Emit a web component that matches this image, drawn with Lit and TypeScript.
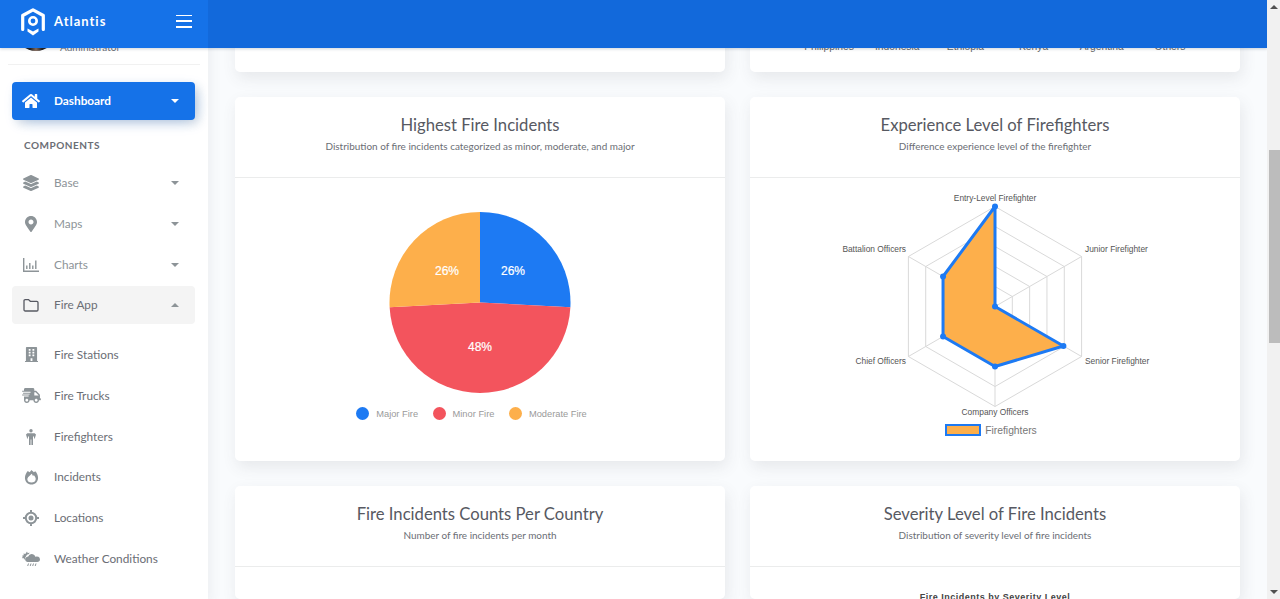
import { LitElement, css, html, svg } from "lit";
import { customElement } from "lit/decorators.js";

const ICONS: Record<string, unknown> = {
	home: svg`<svg viewBox="0 0 576 512" width="18" height="16"><path fill="currentColor" d="M280.4 148.3 96 300.1V464a16 16 0 0 0 16 16l112-.3a16 16 0 0 0 15.9-16V368a16 16 0 0 1 16-16h64a16 16 0 0 1 16 16v95.6a16 16 0 0 0 16 16.1l112 .3a16 16 0 0 0 16-16V300L295.700 148.300a12.200 12.200 0 0 0-15.300 0zM571.600 251.500 488 182.600V44a12 12 0 0 0-12-12h-56a12 12 0 0 0-12 12v72.600L318.500 43a48 48 0 0 0-61 0L4.300 251.500a12 12 0 0 0-1.600 16.900l25.500 31A12 12 0 0 0 45.200 301l235.200-193.700a12.200 12.200 0 0 1 15.300 0L530.900 301a12 12 0 0 0 16.900-1.600l25.500-31a12 12 0 0 0-1.700-16.900z"/></svg>`,
	layers: svg`<svg viewBox="0 0 512 512" width="16" height="16"><path fill="currentColor" d="M12.410 148l232.940 105.700a26.500 26.500 0 0 0 21.300 0L499.590 148c16.550-7.510 16.550-32.520 0-40L266.650 2.300a26.500 26.500 0 0 0-21.300 0L12.410 108c-16.550 7.510-16.550 32.520 0 40zm487.180 88.280-58.090-26.330-161.640 73.270a58.500 58.500 0 0 1-47.720 0L70.500 209.950l-58.090 26.330c-16.550 7.500-16.550 32.500 0 40l232.940 105.590a26.500 26.500 0 0 0 21.300 0L499.590 276.280c16.550-7.500 16.550-32.500 0-40zm0 127.800-57.870-26.230-161.860 73.370a58.500 58.500 0 0 1-47.720 0L70.280 337.850l-57.870 26.230c-16.550 7.500-16.550 32.500 0 40l232.940 105.590a26.500 26.500 0 0 0 21.300 0l232.940-105.590c16.550-7.500 16.550-32.500 0-40z"/></svg>`,
	marker: svg`<svg viewBox="0 0 384 512" width="12" height="16"><path fill="currentColor" d="M172.268 501.670C26.970 291.031 0 268.413 0 192 0 85.961 85.961 0 192 0s192 85.961 192 192c0 76.413-26.970 99.031-172.268 309.670-9.535 13.774-29.930 13.773-39.464 0zM192 272c44.183 0 80-35.817 80-80s-35.817-80-80-80-80 35.817-80 80 35.817 80 80 80z"/></svg>`,
	chart: svg`<svg viewBox="0 0 16 14" width="16" height="14"><path fill="none" stroke="currentColor" stroke-width="1.400" d="M.7 0v13.300H16M3.800 11V7.500M6.800 11V5M9.800 11V7.500M12.800 11V2.500"/></svg>`,
	folder: svg`<svg viewBox="0 0 16 14" width="16" height="14"><path fill="none" stroke="currentColor" stroke-width="1.300" d="M1 2.800c0-.7.500-1.200 1.200-1.200h3.300l1.800 1.700h6.500c.7 0 1.200.5 1.200 1.200v7.300c0 .7-.5 1.200-1.200 1.200H2.200c-.7 0-1.200-.5-1.200-1.200z"/></svg>`,
	building: svg`<svg viewBox="0 0 448 512" width="13" height="15"><path fill="currentColor" d="M436 480h-20V24c0-13.255-10.745-24-24-24H56C42.745 0 32 10.745 32 24v456H12c-6.627 0-12 5.373-12 12v20h448v-20c0-6.627-5.373-12-12-12zM128 76c0-6.627 5.373-12 12-12h40c6.627 0 12 5.373 12 12v40c0 6.627-5.373 12-12 12h-40c-6.627 0-12-5.373-12-12V76zm0 96c0-6.627 5.373-12 12-12h40c6.627 0 12 5.373 12 12v40c0 6.627-5.373 12-12 12h-40c-6.627 0-12-5.373-12-12v-40zm52 148h-40c-6.627 0-12-5.373-12-12v-40c0-6.627 5.373-12 12-12h40c6.627 0 12 5.373 12 12v40c0 6.627-5.373 12-12 12zm76 160h-64v-84c0-6.627 5.373-12 12-12h40c6.627 0 12 5.373 12 12v84zm64-172c0 6.627-5.373 12-12 12h-40c-6.627 0-12-5.373-12-12v-40c0-6.627 5.373-12 12-12h40c6.627 0 12 5.373 12 12v40zm0-96c0 6.627-5.373 12-12 12h-40c-6.627 0-12-5.373-12-12v-40c0-6.627 5.373-12 12-12h40c6.627 0 12 5.373 12 12v40zm0-96c0 6.627-5.373 12-12 12h-40c-6.627 0-12-5.373-12-12V76c0-6.627 5.373-12 12-12h40c6.627 0 12 5.373 12 12v40z"/></svg>`,
	truck: svg`<svg viewBox="0 0 640 512" width="19" height="15"><path fill="currentColor" d="M624 352h-16V243.900c0-12.700-5.100-24.900-14.100-33.900L494 110.100c-9-9-21.200-14.100-33.900-14.100H416V48c0-26.500-21.500-48-48-48H112C85.500 0 64 21.500 64 48v48H8c-4.400 0-8 3.600-8 8v16c0 4.400 3.600 8 8 8h272c4.400 0 8 3.600 8 8v16c0 4.400-3.600 8-8 8H40c-4.400 0-8 3.600-8 8v16c0 4.400 3.600 8 8 8h208c4.400 0 8 3.600 8 8v16c0 4.400-3.600 8-8 8H8c-4.400 0-8 3.600-8 8v16c0 4.400 3.600 8 8 8h208c4.400 0 8 3.600 8 8v16c0 4.400-3.600 8-8 8H64v128c0 53 43 96 96 96s96-43 96-96h128c0 53 43 96 96 96s96-43 96-96h48c8.800 0 16-7.200 16-16v-32c0-8.800-7.200-16-16-16zM160 464c-26.500 0-48-21.500-48-48s21.500-48 48-48 48 21.500 48 48-21.500 48-48 48zm320 0c-26.500 0-48-21.500-48-48s21.500-48 48-48 48 21.500 48 48-21.500 48-48 48zm80-208H416V144h44.100l99.900 99.900V256z"/></svg>`,
	person: svg`<svg viewBox="0 0 10 16" width="10" height="16"><circle cx="5" cy="1.800" r="1.700" fill="currentColor"/><path fill="currentColor" d="M1.400 4.300h7.200L10 5.500 8.600 10.200 7.700 7.300 7 7.500V16H5.400v-5.500h-.8V16H3V7.500l-.7-.2-.9 2.900L0 5.500z"/></svg>`,
	fire: svg`<svg viewBox="0 0 16 16" width="15" height="16"><path fill="currentColor" fill-rule="evenodd" d="M4 1.500 6 3 8 .5c1 1 2 1.500 2.500 2.300L12 1.800C13.800 3.500 15 6 15 9c0 4-3.100 7-7 7s-7-3-7-7c0-3 1.300-5.500 3-7.500zM8 4.500C7.500 6 4 7.500 3.500 10c0 2.400 2 3.800 4.500 3.800s4.500-1.400 4.500-3.800c0-1.500-1-3-2-4l-1 1C9.300 6 8.700 5 8 4.500z"/></svg>`,
	target: svg`<svg viewBox="0 0 16 16" width="16" height="16"><path fill="none" stroke="currentColor" stroke-width="2" d="M8 2.800a5.200 5.200 0 1 0 0 10.400 5.200 5.200 0 0 0 0-10.400zM8 0v3M8 13v3M0 8h3M13 8h3"/><circle cx="8" cy="8" r="2.500" fill="currentColor"/></svg>`,
	weather: svg`<svg viewBox="0 0 18 16" width="18" height="16"><path fill="currentColor" d="M5 .5l.8 1.700 1.700-.6-.5 1.500a4 4 0 0 0-3.200 2.700 3 3 0 0 0-1 2.200l-.7.700-.5-1.700-1.600.3.700-1.700L0 4.700l1.800-.5-.3-1.800 1.800.7zM9.500 3a4 4 0 0 1 3.800 2.800A3.200 3.200 0 0 1 18 8.500c0 1.500-1.200 2.500-2.700 2.500H5.500a2.600 2.600 0 0 1-.8-5 2.900 2.900 0 0 1 1.500-.6A4 4 0 0 1 9.500 3z"/><path fill="none" stroke="currentColor" stroke-width="1" d="M6.500 12.500l-.8 2.500M9 12.500l-.8 2.500M11.500 12.500l-.8 2.500M14 12.500l-.8 2.500"/></svg>`,
};

type NavItem = { label: string; icon: string; caret?: "down" | "up"; open?: boolean };

const MAIN_NAV: NavItem[] = [
	{ label: "Base", icon: "layers", caret: "down" },
	{ label: "Maps", icon: "marker", caret: "down" },
	{ label: "Charts", icon: "chart", caret: "down" },
	{ label: "Fire App", icon: "folder", caret: "up", open: true },
];

const SUB_NAV: NavItem[] = [
	{ label: "Fire Stations", icon: "building" },
	{ label: "Fire Trucks", icon: "truck" },
	{ label: "Firefighters", icon: "person" },
	{ label: "Incidents", icon: "fire" },
	{ label: "Locations", icon: "target" },
	{ label: "Weather Conditions", icon: "weather" },
];

const TOP_LEGEND = ["Philippines", "Indonesia", "Ethiopia", "Kenya", "Argentina", "Others"];

// center of the pie and its radius, same numbers as the svg viewBox below
const PIE = { cx: 91, cy: 90.500, r: 90.500 };
const PIE_SLICES = [
	{ pct: 26, name: "Major Fire", start: 0, end: 93, color: "#1d7af3", lx: 124, ly: 63 },
	{ pct: 48, name: "Minor Fire", start: 93, end: 267, color: "#f3545d", lx: 91, ly: 139 },
	{ pct: 26, name: "Moderate Fire", start: 267, end: 360, color: "#fdaf4b", lx: 58, ly: 63 },
];

function slicePath(start: number, end: number) {
	const pt = (a: number) => {
		const rad = ((a - 90) * Math.PI) / 180;
		return `${PIE.cx + PIE.r * Math.cos(rad)} ${PIE.cy + PIE.r * Math.sin(rad)}`;
	};
	const large = end - start > 180 ? 1 : 0;
	return `M${PIE.cx} ${PIE.cy}L${pt(start)}A${PIE.r} ${PIE.r} 0 ${large} 1 ${pt(end)}Z`;
}

// radar: center and outer radius in svg coords, spokes start at 12 o'clock
const RADAR = { cx: 165, cy: 118.500, r: 100 };
const RADAR_DATA = [1, 0, 0.79, 0.6, 0.6, 0.6];

function radarPoint(i: number, f: number) {
	const a = ((i * 60 - 90) * Math.PI) / 180;
	return [RADAR.cx + RADAR.r * f * Math.cos(a), RADAR.cy + RADAR.r * f * Math.sin(a)];
}

@customElement("app-root")
export class AppRoot extends LitElement {
	static styles = css`
		:host {
			display: block;
			height: 599px;
			overflow: hidden;
			position: relative;
			font-family: Lato, "Liberation Sans", sans-serif;
			color: #575962;
			background: #f9fbfd;
		}
		.layout {
			display: flex;
			height: 599px;
		}
		.topbar {
			position: absolute;
			top: 0;
			left: 0;
			right: 13px;
			height: 48px;
			display: flex;
			z-index: 3;
			background: #1269db;
			box-shadow: 0 1px 3px rgba(18, 38, 63, 0.2);
		}
		.brand {
			width: 208px;
			background: #1572e8;
			display: flex;
			align-items: center;
			padding: 0 0 6px 20px;
			box-sizing: border-box;
			color: #fff;
		}
		.logo {
			margin-top: 2px;
			flex: none;
		}
		.brand-name {
			font-size: 13px;
			font-weight: 700;
			letter-spacing: 1px;
			margin-left: 8px;
		}
		.burger {
			margin-left: auto;
			margin-right: 16px;
			width: 16px;
			height: 13px;
			display: flex;
			flex-direction: column;
			justify-content: space-between;
		}
		.burger span {
			height: 1.500px;
			background: #fff;
		}
		.sidebar {
			width: 208px;
			flex: none;
			background: #fff;
			box-shadow: 4px 4px 10px rgba(69, 65, 78, 0.06);
			padding: 0 12px;
			box-sizing: border-box;
			z-index: 1;
			overflow: hidden;
		}
		.user {
			height: 65px;
			margin: 0 -4px;
			padding-left: 52px;
			box-sizing: border-box;
			border-bottom: 1px solid #f1f1f1;
			font-size: 10px;
			color: #6b6e75;
			display: flex;
			align-items: flex-end;
			padding-bottom: 11px;
			position: relative;
		}
		.avatar {
			width: 40px;
			height: 40px;
			border-radius: 50%;
			background: linear-gradient(90deg, #1f1c1c 35%, #8a6f60 50%, #1f1c1c 65%);
			position: absolute;
			left: 8px;
			top: 11px;
		}
		.nav-item {
			display: flex;
			align-items: center;
			height: 38px;
			border-radius: 4px;
			font-size: 11.800px;
			color: #8d9498;
		}
		.nav-item .label {
			padding-bottom: 1px;
		}
		.nav-item .ico {
			width: 20px;
			margin-left: 9px;
			margin-right: 13px;
			display: flex;
			justify-content: center;
			color: #8d9498;
		}
		.nav-item .caret {
			margin-left: auto;
			margin-right: 16px;
			width: 0;
			height: 0;
			border-left: 4px solid transparent;
			border-right: 4px solid transparent;
			border-top: 4px solid #8d9498;
		}
		.nav-item .caret.up {
			border-top: 0;
			border-bottom: 4px solid #8d9498;
		}
		.dashboard {
			margin-top: 17px;
			background: #1572e8;
			color: #fff;
			font-weight: 700;
			box-shadow: 4px 4px 10px 0 rgba(0, 0, 0, 0.1), 4px 4px 15px -5px rgba(21, 114, 232, 0.4);
			width: 183px;
		}
		.dashboard .ico {
			color: #fff;
		}
		.dashboard .caret {
			border-top-color: #fff;
		}
		.section {
			font-size: 10px;
			font-weight: 700;
			letter-spacing: 0.500px;
			color: #6b6e75;
			margin: 18px 0 12px 12px;
			line-height: 14px;
		}
		.nav-list {
			display: flex;
			flex-direction: column;
			gap: 2.800px;
			width: 183px;
		}
		.nav-item.open {
			background: #f4f4f4;
			color: #6b6e75;
		}
		.nav-item.open .ico {
			color: #575962;
		}
		.sub-list {
			display: flex;
			flex-direction: column;
			gap: 2.800px;
			margin-top: 11.600px;
			width: 183px;
		}
		.sub-list .nav-item {
			color: #6b6e75;
		}
		.main {
			flex: 1;
			display: grid;
			grid-template-columns: 490px 490px;
			grid-template-rows: 72px 363.500px 1fr;
			column-gap: 25px;
			row-gap: 25px;
			padding-left: 27px;
			align-content: start;
			overflow: hidden;
			min-width: 0;
		}
		.card {
			background: #fff;
			border-radius: 5px;
			box-shadow: 2px 6px 15px 0 rgba(69, 65, 78, 0.1);
			min-height: 0;
			overflow: hidden;
		}
		.card.clipped {
			border-radius: 0 0 5px 5px;
			display: flex;
			justify-content: center;
			padding: 39.500px 0 0 9px;
			box-sizing: border-box;
		}
		.top-legend {
			display: grid;
			grid-template-columns: repeat(6, 68.200px);
			justify-items: center;
			font: 10.300px "Liberation Sans", sans-serif;
			color: #666;
			line-height: 13px;
		}
		.card-head {
			height: 81px;
			box-sizing: border-box;
			padding-top: 16px;
			text-align: center;
			border-bottom: 1px solid #ebecec;
		}
		.card-title {
			font-size: 16.650px;
			line-height: 24px;
			color: #575962;
		}
		.card-sub {
			font-size: 9.950px;
			line-height: 18px;
			color: #6b6e75;
		}
		.card-body {
			display: flex;
			flex-direction: column;
			align-items: center;
		}
		.pie-body {
			padding-top: 34px;
		}
		.pie-svg {
			display: block;
		}
		.pie-pct {
			font: 12px "Liberation Sans", sans-serif;
			fill: #fff;
			stroke: #fff;
			stroke-width: 0.200px;
			text-anchor: middle;
		}
		.legend {
			display: flex;
			gap: 14.500px;
			margin-top: 13px;
			padding-right: 17px;
			font: 9.300px "Liberation Sans", sans-serif;
			color: #9a9a9a;
			align-items: center;
		}
		.legend-item {
			display: flex;
			align-items: center;
			gap: 7px;
		}
		.dot {
			width: 13px;
			height: 13px;
			border-radius: 50%;
		}
		.radar-body {
			padding-top: 10px;
		}
		.radar-label {
			font: 8.400px "Liberation Sans", sans-serif;
			fill: #555;
		}
		.radar-legend {
			display: flex;
			align-items: center;
			gap: 4px;
			font: 10.300px "Liberation Sans", sans-serif;
			color: #777;
			padding-right: 8px;
		}
		.swatch {
			width: 32px;
			height: 8px;
			background: #fdaf4b;
			border: 2px solid #1d7af3;
		}
		.chart-title {
			font: 700 9px "Liberation Sans", sans-serif;
			color: #444;
			letter-spacing: 0.500px;
			text-align: center;
			margin-top: 25px;
		}
		.scrollbar {
			width: 13px;
			flex: none;
			background: #f1f1f1;
			display: flex;
			flex-direction: column;
			align-items: center;
			z-index: 4;
		}
		.thumb {
			margin-top: 141px;
			width: 11px;
			margin-left: 1px;
			height: 193px;
			background: #bcbcbc;
		}
		.arrow {
			width: 0;
			height: 0;
			margin-top: 5px;
			border-left: 4px solid transparent;
			border-right: 4px solid transparent;
			border-bottom: 4px solid #505050;
		}
		.arrow.down {
			margin-top: auto;
			margin-bottom: 5px;
			border-bottom: 0;
			border-top: 4px solid #505050;
		}
	`;

	private navItem(item: NavItem) {
		return html`<div class="nav-item ${item.open ? "open" : ""}">
			<span class="ico">${ICONS[item.icon]}</span>
			<span class="label">${item.label}</span>
			${item.caret ? html`<span class="caret ${item.caret === "up" ? "up" : ""}"></span>` : null}
		</div>`;
	}

	private renderPie() {
		return html`<svg class="pie-svg" width="182" height="182" viewBox="0 0 182 182">
			${PIE_SLICES.map((s) => svg`<path d=${slicePath(s.start, s.end)} fill=${s.color}></path>`)}
			${PIE_SLICES.map((s) => svg`<text class="pie-pct" x=${s.lx} y=${s.ly}>${s.pct}%</text>`)}
		</svg>`;
	}

	private renderRadar() {
		const rings = [0.2, 0.4, 0.6, 0.8, 1];
		const ringPts = (f: number) =>
			[0, 1, 2, 3, 4, 5].map((i) => radarPoint(i, f).join(",")).join(" ");
		const dataPts = RADAR_DATA.map((f, i) => radarPoint(i, f));
		const labels = [
			{ t: "Entry-Level Firefighter", x: 165, y: 13, a: "middle" },
			{ t: "Junior Firefighter", x: 255, y: 64, a: "start" },
			{ t: "Senior Firefighter", x: 255, y: 176, a: "start" },
			{ t: "Company Officers", x: 165, y: 227, a: "middle" },
			{ t: "Chief Officers", x: 76, y: 176, a: "end" },
			{ t: "Battalion Officers", x: 76, y: 64, a: "end" },
		];
		return html`<svg width="330" height="236" viewBox="0 0 330 236">
			${rings.map((f) => svg`<polygon points=${ringPts(f)} fill="none" stroke="#d9d9d9" stroke-width="1"></polygon>`)}
			${[0, 1, 2, 3, 4, 5].map((i) => {
				const [x, y] = radarPoint(i, 1);
				return svg`<line x1=${RADAR.cx} y1=${RADAR.cy} x2=${x} y2=${y} stroke="#d9d9d9"></line>`;
			})}
			<polygon points=${dataPts.map((p) => p.join(",")).join(" ")} fill="#fdaf4b" stroke="#1d7af3" stroke-width="3" stroke-linejoin="round"></polygon>
			${dataPts.map(([x, y]) => svg`<circle cx=${x} cy=${y} r="3" fill="#1d7af3"></circle>`)}
			${labels.map((l) => svg`<text class="radar-label" x=${l.x} y=${l.y} text-anchor=${l.a}>${l.t}</text>`)}
		</svg>`;
	}

	render() {
		return html`
			<div class="topbar">
				<div class="brand">
					<svg class="logo" width="26" height="28" viewBox="0 0 25 28">
						<path fill="none" stroke="#fff" stroke-width="3.200" stroke-linejoin="round" stroke-linecap="round" d="M2.200 21.500V7.500L12.500 1.800 22.800 7.500v14"></path>
						<circle cx="12.500" cy="13" r="3.700" fill="none" stroke="#fff" stroke-width="2.600"></circle>
						<path fill="#fff" d="M7 20.500l5.500 3 5.500-3v3l-5.500 4-5.500-4z"></path>
					</svg>
					<span class="brand-name">Atlantis</span>
					<div class="burger"><span></span><span></span><span></span></div>
				</div>
			</div>
			<div class="layout">
				<aside class="sidebar">
					<div class="user"><span class="avatar"></span>Administrator</div>
					<div class="nav-item dashboard">
						<span class="ico">${ICONS.home}</span>
						<span class="label">Dashboard</span>
						<span class="caret"></span>
					</div>
					<div class="section">COMPONENTS</div>
					<div class="nav-list">${MAIN_NAV.map((n) => this.navItem(n))}</div>
					<div class="sub-list">${SUB_NAV.map((n) => this.navItem(n))}</div>
				</aside>
				<main class="main">
					<div class="card clipped"></div>
					<div class="card clipped">
						<div class="top-legend">${TOP_LEGEND.map((t) => html`<span>${t}</span>`)}</div>
					</div>
					<section class="card">
						<div class="card-head">
							<div class="card-title">Highest Fire Incidents</div>
							<div class="card-sub">Distribution of fire incidents categorized as minor, moderate, and major</div>
						</div>
						<div class="card-body pie-body">
							${this.renderPie()}
							<div class="legend">
								${PIE_SLICES.map((s) => html`<span class="legend-item"><span class="dot" style="background:${s.color}"></span>${s.name}</span>`)}
							</div>
						</div>
					</section>
					<section class="card">
						<div class="card-head">
							<div class="card-title">Experience Level of Firefighters</div>
							<div class="card-sub">Difference experience level of the firefighter</div>
						</div>
						<div class="card-body radar-body">
							${this.renderRadar()}
							<div class="radar-legend"><span class="swatch"></span>Firefighters</div>
						</div>
					</section>
					<section class="card">
						<div class="card-head">
							<div class="card-title">Fire Incidents Counts Per Country</div>
							<div class="card-sub">Number of fire incidents per month</div>
						</div>
					</section>
					<section class="card">
						<div class="card-head">
							<div class="card-title">Severity Level of Fire Incidents</div>
							<div class="card-sub">Distribution of severity level of fire incidents</div>
						</div>
						<div class="chart-title">Fire Incidents by Severity Level</div>
					</section>
				</main>
				<div class="scrollbar">
					<span class="arrow"></span>
					<div class="thumb"></div>
					<span class="arrow down"></span>
				</div>
			</div>
		`;
	}
}
